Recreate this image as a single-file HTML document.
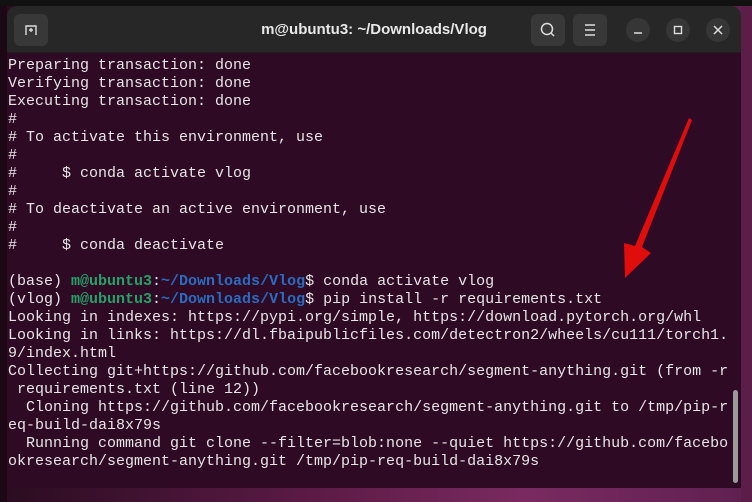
<!DOCTYPE html>
<html><head><meta charset="utf-8"><style>
body{margin:0;width:752px;height:502px;overflow:hidden;background:linear-gradient(90deg,#2a0c20 0%,#5a1a45 40%,#7a2a60 70%,#5e2050 100%);position:relative;font-family:"Liberation Sans",sans-serif}
.topbar{position:absolute;left:0;top:0;width:752px;height:6px;background:#111}
.left{position:absolute;left:0;top:6px;width:7px;height:496px;background:#1c0814}
.right{position:absolute;left:741px;top:6px;width:11px;height:496px;background:#5a1e48}
.win{position:absolute;left:7px;top:6px;width:734px;height:482px;background:#2f0a24;border-radius:10px 10px 0 0;overflow:hidden}
.title{position:absolute;left:0;top:0;width:734px;height:46px;background:#272727;border-bottom:1px solid #1d1d1d}
.title .t{position:absolute;left:0;width:734px;top:15px;text-align:center;color:#e8e8e8;font-weight:bold;font-size:15px}
.btn{position:absolute;top:8px;width:34px;height:32px;background:#383838;border-radius:6px}
.cb{position:absolute;top:12px;width:24px;height:24px;background:#363636;border-radius:50%}
.term{position:absolute;left:1px;top:51px;font-family:"Liberation Mono",monospace;font-size:15px;line-height:18px;color:#e6e6e6;white-space:pre;letter-spacing:0}
.g{color:#26a269;font-weight:bold}.b{color:#2a6cc0;font-weight:bold}
.sb{position:absolute;left:726px;top:384px;width:5px;height:93px;background:#9a9a9a;border-radius:3px}
</style></head><body>
<div class="topbar"></div><div class="left"></div><div class="right"></div>
<div class="win">
<div class="title">
<div class="btn" style="left:7px"><svg width="34" height="32"><path d="M12 21V12h10v9M15 16h4M17 14v4" stroke="#ddd" stroke-width="1.4" fill="none"/></svg></div>
<div class="t">m@ubuntu3: ~/Downloads/Vlog</div>
<div class="btn" style="left:524px"><svg width="34" height="32"><circle cx="16" cy="15" r="5.5" stroke="#ddd" stroke-width="1.5" fill="none"/><path d="M20 19l3 3" stroke="#ddd" stroke-width="1.5"/></svg></div>
<div class="btn" style="left:566px"><svg width="34" height="32"><path d="M12 11h10M12 16h10M12 21h10" stroke="#ddd" stroke-width="1.4"/></svg></div>
<div class="cb" style="left:619px"><svg width="24" height="24"><path d="M8 15h8" stroke="#ddd" stroke-width="1.5"/></svg></div>
<div class="cb" style="left:659px"><svg width="24" height="24"><rect x="8.5" y="8.5" width="7" height="7" stroke="#ddd" stroke-width="1.4" fill="none"/></svg></div>
<div class="cb" style="left:699px"><svg width="24" height="24"><path d="M8 8l8 8M16 8l-8 8" stroke="#ddd" stroke-width="1.5"/></svg></div>
</div>
<div class="term">Preparing transaction: done
Verifying transaction: done
Executing transaction: done
#
# To activate this environment, use
#
#     $ conda activate vlog
#
# To deactivate an active environment, use
#
#     $ conda deactivate

(base) <span class="g">m@ubuntu3</span>:<span class="b">~/Downloads/Vlog</span>$ conda activate vlog
(vlog) <span class="g">m@ubuntu3</span>:<span class="b">~/Downloads/Vlog</span>$ pip install -r requirements.txt
Looking in indexes: https://pypi.org/simple, https://download.pytorch.org/whl
Looking in links: https://dl.fbaipublicfiles.com/detectron2/wheels/cu111/torch1.
9/index.html
Collecting git+https://github.com/facebookresearch/segment-anything.git (from -r
 requirements.txt (line 12))
  Cloning https://github.com/facebookresearch/segment-anything.git to /tmp/pip-r
eq-build-dai8x79s
  Running command git clone --filter=blob:none --quiet https://github.com/facebo
okresearch/segment-anything.git /tmp/pip-req-build-dai8x79s</div>
<div class="sb"></div>
</div>
<svg style="position:absolute;left:0;top:0" width="752" height="502"><path d="M689 118L692 120L642 247L651 253L625 278L624 243L635 246Z" fill="#e00d0d"/></svg>
</body></html>
